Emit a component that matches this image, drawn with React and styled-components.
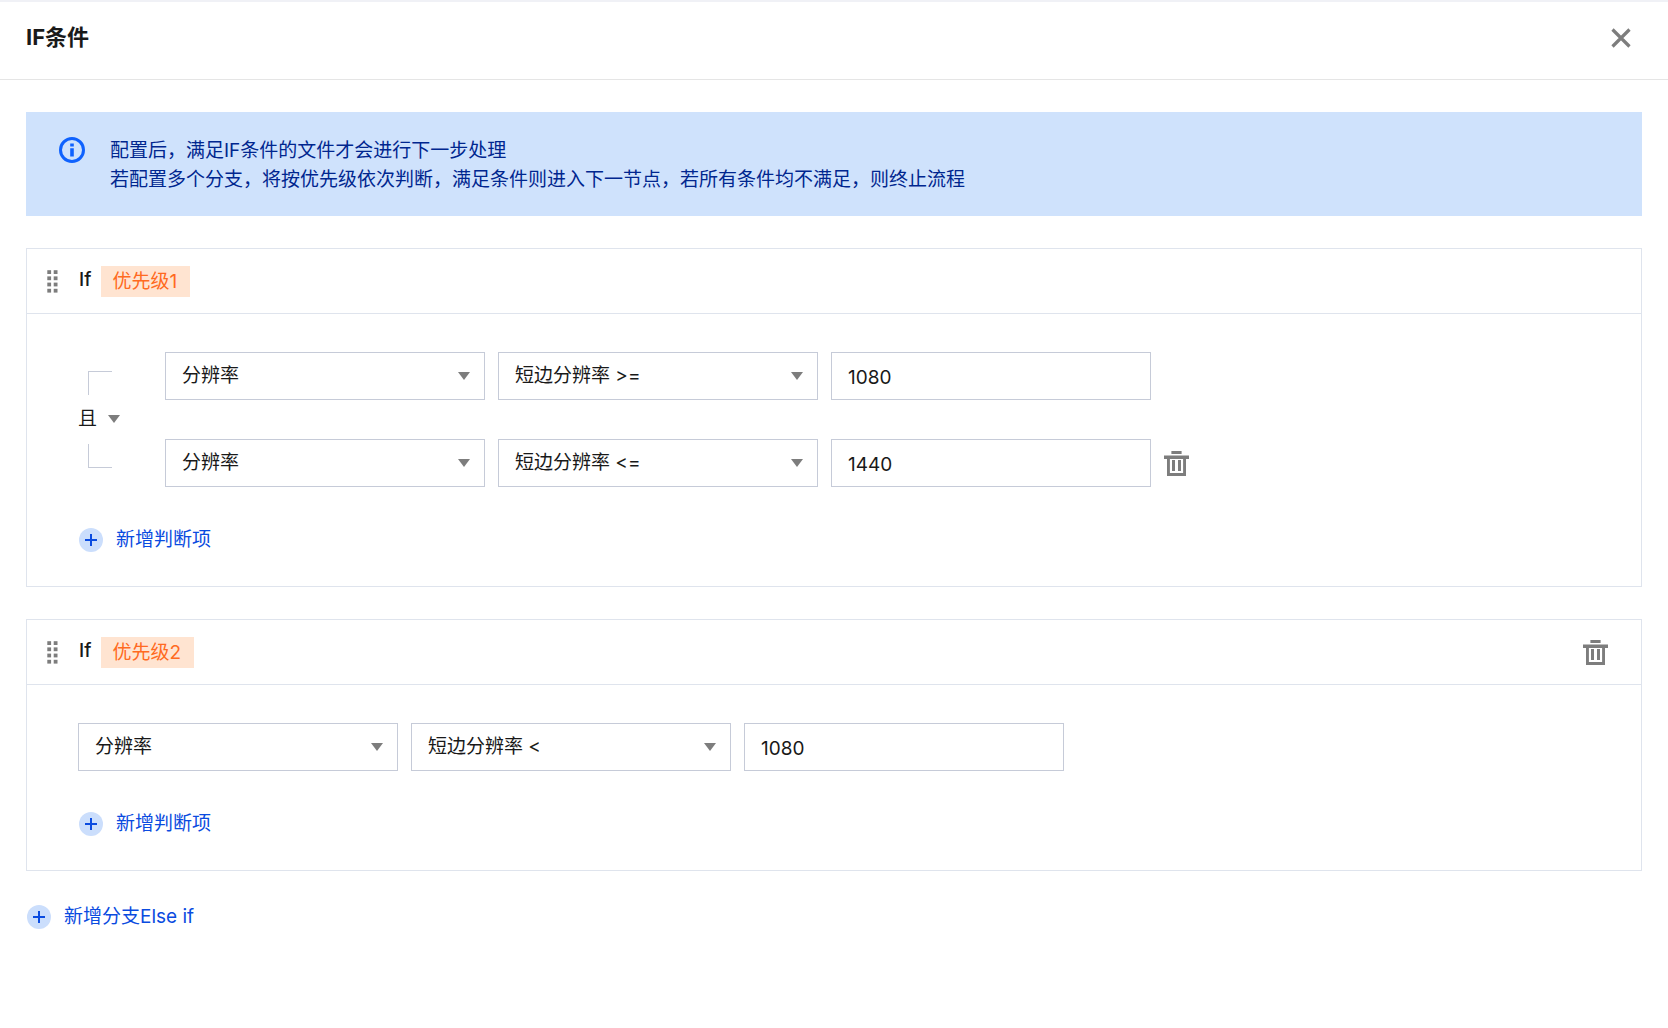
import { useId, useState } from 'react';
import styled, { createGlobalStyle } from 'styled-components';

const FIELDS = ['分辨率', '文件格式', '文件大小', '时长'];
const OPERATORS = ['短边分辨率 >=', '短边分辨率 <=', '短边分辨率 <', '短边分辨率 >'];

const BRANCHES = [
  {
    id: 1,
    rules: [
      { field: '分辨率', operator: '短边分辨率 >=', value: '1080' },
      { field: '分辨率', operator: '短边分辨率 <=', value: '1440' },
    ],
  },
  {
    id: 2,
    rules: [{ field: '分辨率', operator: '短边分辨率 <', value: '1080' }],
  },
];

const CloseIcon = () => (
  <svg width='20' height='20' viewBox='0 0 20 20' aria-hidden='true'>
    <path d='M1.5 1.5l17 17M18.5 1.5l-17 17' stroke='#7d7d7d' strokeWidth='3.2' />
  </svg>
);

const InfoIcon = () => (
  <svg width='26' height='26' viewBox='0 0 26 26' aria-hidden='true'>
    <circle cx='13' cy='13' r='11.5' fill='none' stroke='#0f62fe' strokeWidth='3' />
    <path d='M11.2 6.4h3.6v3.2h-3.6zM11.2 11.2h3.6v8.4h-3.6z' fill='#0f62fe' />
  </svg>
);

const TrashIcon = () => (
  <svg width='25' height='25' viewBox='0 0 25 25' aria-hidden='true'>
    <path
      fillRule='evenodd'
      fill='#7d7d7d'
      d='M7.4 0h10.2v3H7.4zM0 4.6h25V8h-3v17H3V8H0zM5.9 8v13.9h13.2V8z'
    />
    <path d='M8 9h3v11H8zM14 9h3v11h-3z' fill='#7d7d7d' />
  </svg>
);

const DragIcon = () => (
  <svg width='11' height='24' viewBox='0 0 11 24' fill='#7d7d7d' aria-hidden='true'>
    {[1.2, 7.4, 13.6, 19.8].map((y) => (
      <g key={y}>
        <rect x='0.3' y={y} width='3.8' height='3.8' />
        <rect x='6.7' y={y} width='3.8' height='3.8' />
      </g>
    ))}
  </svg>
);

const CaretIcon = () => (
  <svg width='12' height='8' viewBox='0 0 12 8' aria-hidden='true'>
    <path d='M0 0h12L6 8z' fill='#7d7d7d' />
  </svg>
);

const PlusIcon = () => (
  <svg width='24' height='24' viewBox='0 0 24 24' aria-hidden='true'>
    <circle cx='12' cy='12' r='12' fill='#cbdefc' />
    <path d='M12 6v12M6 12h12' stroke='#0a4be0' strokeWidth='2' />
  </svg>
);

const Dropdown = ({ label, options, defaultValue }) => (
  <SelectBox>
    <select aria-label={label} defaultValue={defaultValue}>
      {options.map((option) => (
        <option key={option}>{option}</option>
      ))}
    </select>
    <CaretIcon />
  </SelectBox>
);

const AddAction = ({ children }) => (
  <AddButton type='button'>
    <PlusIcon />
    {children}
  </AddButton>
);

const Combinator = () => (
  <CombinatorColumn>
    <Bracket $side='top' />
    <CombinatorSelect>
      <select aria-label='条件关系' defaultValue='且'>
        <option>且</option>
        <option>或</option>
      </select>
      <CaretIcon />
    </CombinatorSelect>
    <Bracket $side='bottom' />
  </CombinatorColumn>
);

const Branch = ({ priority, rules }) => (
  <Card>
    <CardHeader>
      <DragHandle type='button' aria-label='拖动排序'>
        <DragIcon />
      </DragHandle>
      <BranchName>If</BranchName>
      <Tag>优先级{priority}</Tag>
      {priority > 1 && (
        <HeaderAction>
          <IconButton type='button' aria-label='删除分支'>
            <TrashIcon />
          </IconButton>
        </HeaderAction>
      )}
    </CardHeader>
    <CardBody>
      <RuleGroup>
        {rules.length > 1 && <Combinator />}
        <RuleList>
          {rules.map((rule, index) => (
            <RuleRow key={index}>
              <Dropdown label='判断项' options={FIELDS} defaultValue={rule.field} />
              <Dropdown label='判断方式' options={OPERATORS} defaultValue={rule.operator} />
              <ValueInput type='text' aria-label='判断值' defaultValue={rule.value} />
              {index > 0 && (
                <IconButton type='button' aria-label='删除判断项'>
                  <TrashIcon />
                </IconButton>
              )}
            </RuleRow>
          ))}
        </RuleList>
      </RuleGroup>
      <AddAction>新增判断项</AddAction>
    </CardBody>
  </Card>
);

const App = () => {
  const titleId = useId();
  const [branches] = useState(BRANCHES);

  return (
    <Drawer aria-labelledby={titleId}>
      <GlobalStyle />
      <DrawerHeader>
        <h1 id={titleId}>IF条件</h1>
        <IconButton type='button' aria-label='关闭'>
          <CloseIcon />
        </IconButton>
      </DrawerHeader>
      <DrawerBody>
        <Notice>
          <InfoIcon />
          <p>
            配置后，满足IF条件的文件才会进行下一步处理
            <br />
            若配置多个分支，将按优先级依次判断，满足条件则进入下一节点，若所有条件均不满足，则终止流程
          </p>
        </Notice>
        {branches.map((branch, index) => (
          <Branch key={branch.id} priority={index + 1} rules={branch.rules} />
        ))}
        <DrawerFooter>
          <AddAction>新增分支Else if</AddAction>
        </DrawerFooter>
      </DrawerBody>
    </Drawer>
  );
};

const GlobalStyle = createGlobalStyle`
  * {
    box-sizing: border-box;
  }

  body {
    margin: 0;
    background: #fff;
    color: #191919;
    font-family: Inter, 'Noto Sans CJK SC', sans-serif;
    font-size: 19px;
    line-height: 29px;
  }

  h1, h2, p {
    margin: 0;
  }

  button, input, select {
    margin: 0;
    padding: 0;
    border: 0;
    background: none;
    color: inherit;
    font: inherit;
  }

  button, select {
    cursor: pointer;
  }

  svg {
    display: block;
    flex-shrink: 0;
  }
`;

const Drawer = styled.main`
  border-top: 2px solid #f0f1f6;
`;

const DrawerHeader = styled.header`
  display: flex;
  align-items: center;
  justify-content: space-between;
  padding: 19px 37px 25px 26px;
  border-bottom: 1px solid #e5e5e5;

  h1 {
    font-size: 22px;
    font-weight: 700;
    line-height: 33px;
  }
`;

const DrawerBody = styled.div`
  display: flex;
  flex-direction: column;
  gap: 32px;
  padding: 32px 26px;
`;

const DrawerFooter = styled.footer`
  padding-top: 2px;
`;

const Notice = styled.section`
  display: flex;
  gap: 25px;
  padding: 24px 33px 22px;
  background: #cfe2fc;
  color: #00268f;

  svg {
    margin-top: 1px;
  }
`;

const Card = styled.section`
  border: 1px solid #dfe4ed;
`;

const CardHeader = styled.header`
  display: flex;
  align-items: center;
  height: 65px;
  padding: 0 33px 0 20px;
  border-bottom: 1px solid #dfe4ed;
`;

const DragHandle = styled.button`
  cursor: grab;
`;

const BranchName = styled.h2`
  margin: 0 10px 0 21px;
  padding-bottom: 3px;
  font-size: 19px;
  font-weight: 500;
`;

const Tag = styled.span`
  padding: 1px 13px 1px 11px;
  background: #ffe4d1;
  color: #ff6a21;
`;

const HeaderAction = styled.div`
  display: flex;
  margin-left: auto;
`;

const IconButton = styled.button`
  flex-shrink: 0;
`;

const CardBody = styled.div`
  padding: 38px 51px 34px;
`;

const RuleGroup = styled.div`
  display: flex;
  margin-bottom: 41px;
`;

const CombinatorColumn = styled.div`
  display: flex;
  flex-direction: column;
  justify-content: center;
  width: 87px;
`;

const Bracket = styled.div`
  width: 24px;
  height: 24px;
  margin-left: 10px;
  border-left: 1px solid #c6cbd8;
  border-${({ $side }) => $side}: 1px solid #c6cbd8;
`;

const CombinatorSelect = styled.label`
  display: flex;
  align-items: center;
  gap: 11px;
  padding: 9px 0 11px;

  select {
    appearance: none;
    width: 19px;
  }
`;

const RuleList = styled.div`
  display: flex;
  flex: 1;
  flex-direction: column;
  gap: 39px;
`;

const RuleRow = styled.div`
  display: flex;
  align-items: center;
  gap: 13px;
`;

const SelectBox = styled.div`
  position: relative;
  width: 320px;

  select {
    appearance: none;
    width: 100%;
    height: 48px;
    padding: 0 40px 2px 16px;
    border: 1px solid #c6cbd8;
  }

  svg {
    position: absolute;
    top: 20px;
    right: 15px;
    pointer-events: none;
  }
`;

const ValueInput = styled.input`
  width: 320px;
  height: 48px;
  padding: 2px 16px 0;
  border: 1px solid #c6cbd8;
`;

const AddButton = styled.button`
  display: flex;
  align-items: center;
  gap: 13px;
  padding-left: 1px;
  color: #0a4be0;
  line-height: 24px;
`;

export default App;
